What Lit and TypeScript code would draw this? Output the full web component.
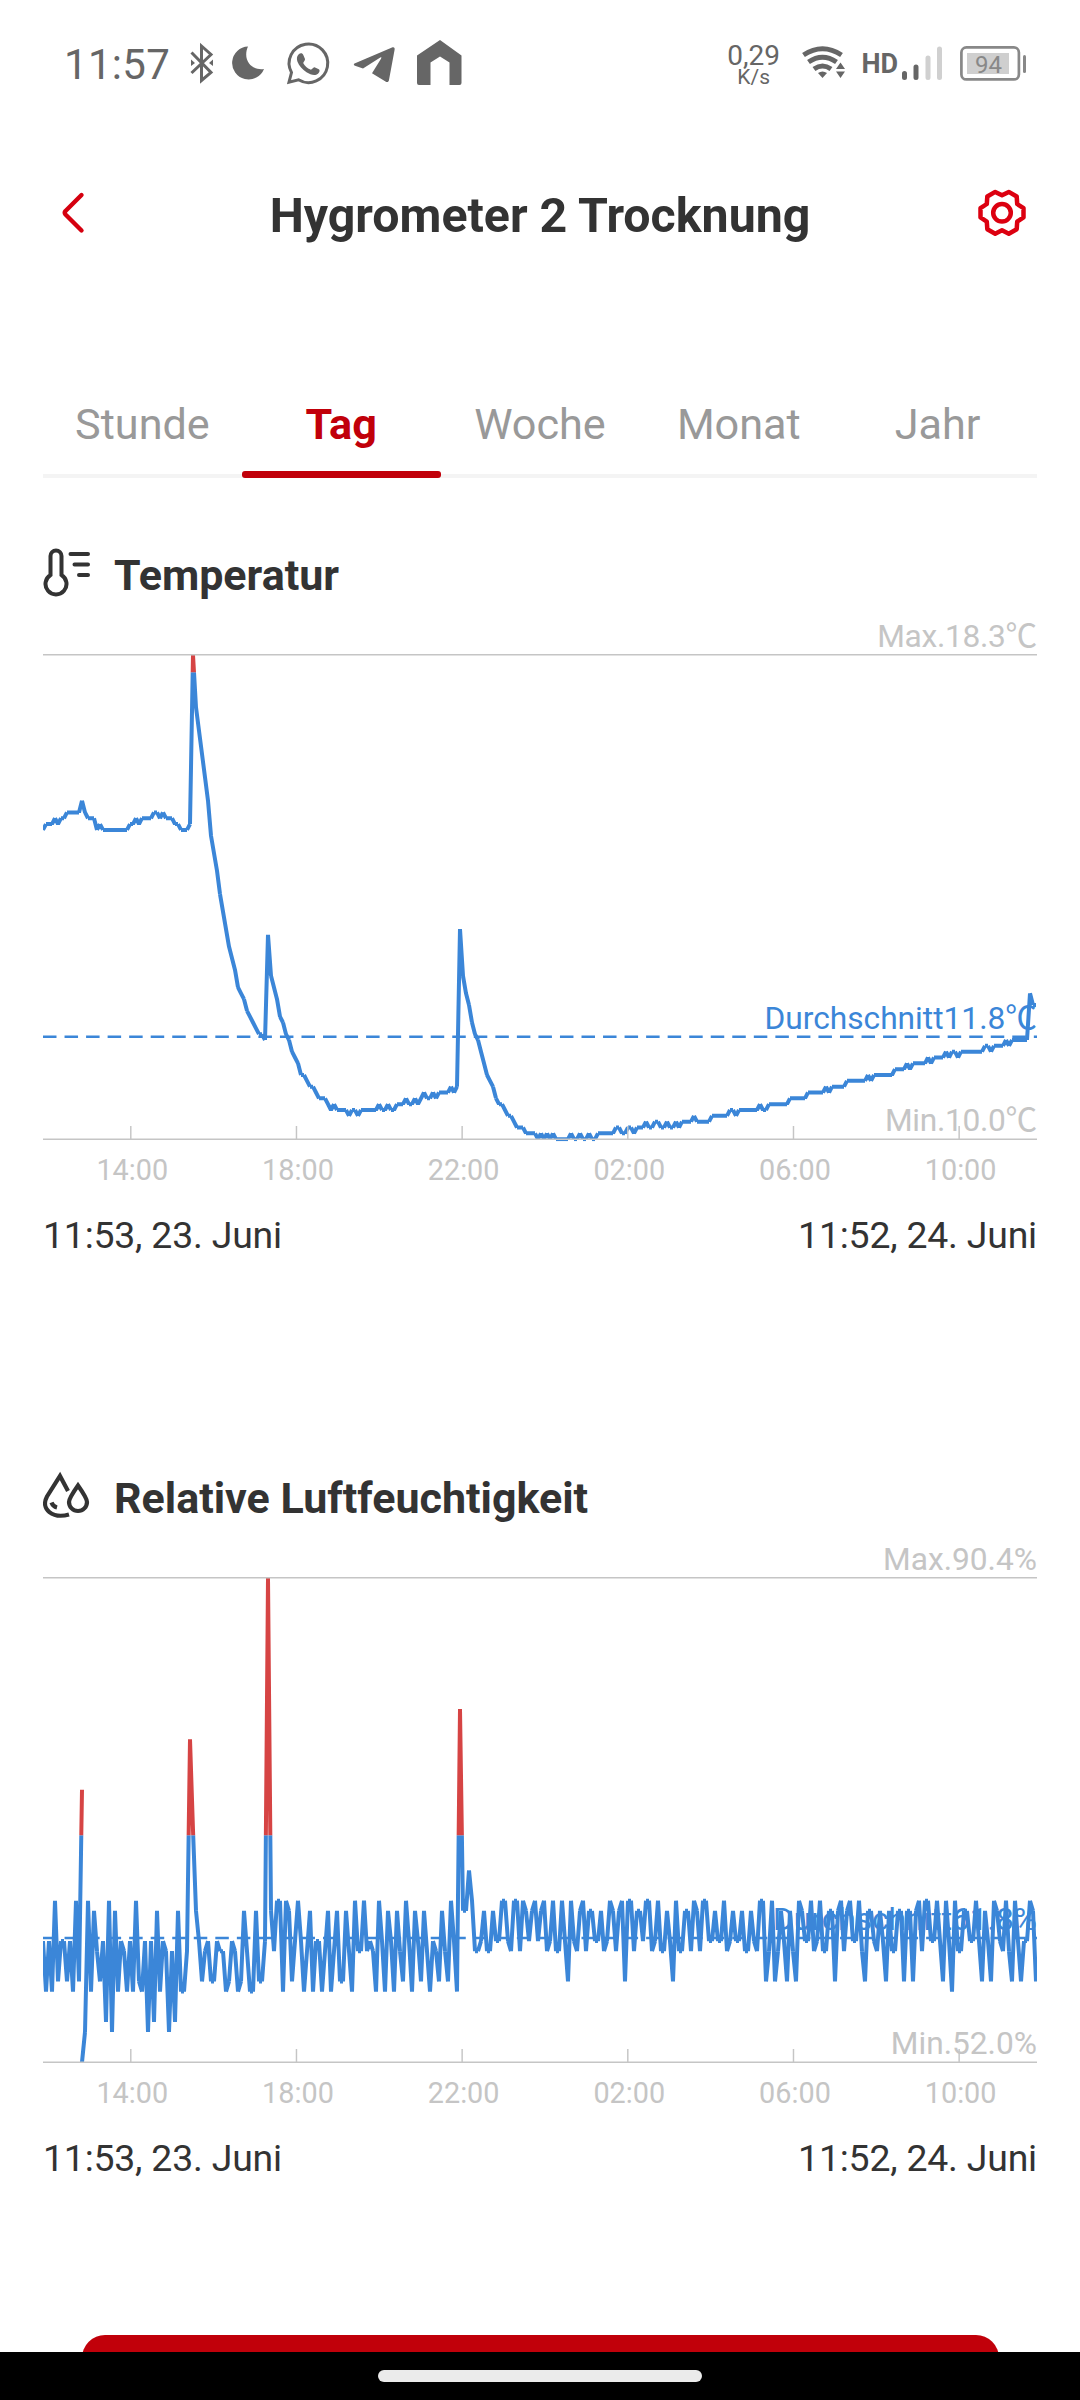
import { LitElement, html, svg, css } from "lit";
import { customElement, property, state } from "lit/decorators.js";
import { classMap } from "lit/directives/class-map.js";

/** A run of readings: first sample slot plus consecutive levels. */
interface Run {
  start: number;
  levels: number[];
}

interface Series {
  runs: Run[];
  maxLevel: number;
  alertLevel: number;
  averageY: number;
  max: string;
  average: string;
  min: string;
}

const rep = (value: number, count: number): number[] => new Array(count).fill(value);

/* Tenths of a degree above 10.0 °C */
const temperature: Series = {
  maxLevel: 83,
  alertLevel: 80,
  averageY: 432.8,
  max: "Max.18.3℃",
  average: "Durchschnitt11.8℃",
  min: "Min.10.0℃",
  runs: [
    {
      start: 0,
      levels: [
        53, 54, 54, 54, 55, 54, 55, 55, 56, 56, 56, 56, 56, 58, 56, 55, 55, 55, 53, 54,
        ...rep(53, 9), 54, 54, 55, 54, 55, 55, 55, 55, 56, 56, 55, 56, 55, 55, 55, 54, 54, 53, 53, 53, 54,
        83, 74, 70, 66, 62, 58, 52, 49, 46, 42, 39, 36, 33, 31, 29, 26, 25, 24, 22, 21, 20, 19, 18, 18, 17,
        35, 28, 26, 24, 21, 20, 18, 17, 15, 14, 13, 11, 11, 10, 9, 9, 8, 7, 7, 7, 6, 5, 6, 5,
        5, 5, 5, 4, 5, 5, 4, 5, 5, 5, 5, 5, 5, 6, 5, 5, 6, 5, 5, 6, 6, 6, 7, 6, 6, 7, 6, 7,
        8, 7, 7, 8, 7, 8, 8, 8, 8, 9, 8, 9,
        36, 28, 25, 23, 20, 18, 17, 15, 13, 11, 10, 9, 7, 6, 6, 5, 4, 4, 3, 2, 2, 2,
        1, 1, 1, 1, 0, 1, 0, 1, 0, 1, 0, 0, 0, 0, 0, 1, 0, 0, 1, 0, 0, 1, 0, 0,
        ...rep(1, 6), 2, 2, 1, 1, 2, 2, 1, 2, 2, 2, 3, 2, 2, 3, 3, 2, 2, 3, 2, 2, 3, 2,
        ...rep(3, 4), 4, ...rep(3, 5), ...rep(4, 6), 5, 5, 4, ...rep(5, 7), 6, 5, 5,
        ...rep(6, 7), ...rep(7, 6), ...rep(8, 6), 9, 8, ...rep(9, 5), ...rep(10, 7), 11, 10,
        ...rep(11, 7), ...rep(12, 4), 13, 12, ...rep(13, 5), 14, 13, ...rep(14, 4), 15, 14, 15, 15, 14,
        ...rep(15, 8), 16, 16, 15, 16, 16, 16, 16, 17, 16, ...rep(17, 6), 25, 23, 23,
      ],
    },
  ],
};

/* Steps of 0.8 % above 52.0 % */
const humidity: Series = {
  maxLevel: 48,
  alertLevel: 22.5,
  averageY: 411,
  max: "Max.90.4%",
  average: "Durchschnitt61.8%",
  min: "Min.52.0%",
  runs: [
    { start: 0, levels: [12, 7, 12, 7, 16, 8, 12, 12, 8, 12, 7, 16, 8, 27] },
    {
      start: 13,
      levels: [
        0, 3, 16, 7, 15, 11, 8, 12, 4, 16, 3, 15, 7, 12, 11, 7, 12, 7, 16, 8, 7, 12, 3, 12, 4, 15, 7,
        12, 11, 3, 11, 4, 15, 7, 7, 11, 32, 23, 15, 12, 8, 11, 12, 8, 8, 12, 11, 11, 7, 8, 12, 11, 7, 8,
        15, 11, 7, 7, 15, 8, 8, 12, 48, 15, 11, 16, 16, 7, 16, 15, 8, 12, 16, 12, 7, 11, 15, 7, 12, 12, 7,
        11, 15, 7, 11, 15, 8, 8, 15, 11, 7, 16, 11, 11, 16, 11, 12, 11, 7, 16, 12,
        7, 15, 12, 7, 15, 11, 8, 16, 12, 7, 15, 12, 8, 15, 11, 7, 12, 11, 8, 15, 11, 8, 16, 12, 7,
        35, 15, 15, 19, 16, 11, 11, 12, 15, 11, 11, 15, 12, 12, 16, 16, 12, 11, 16, 16, 11, 16, 15, 12,
        15, 16, 12, 15, 16, 11, 12, 16, 11, 11, 16, 12, 8, 16, 12, 11, 15, 16, 11, 15, 15, 12, 12, 15,
        11, 12, 16, 15, 11, 15, 16, 8, 16, 16, 11, 15, 15, 12, 16, 16, 11, 12, 16, 11, 11, 15, 12, 8,
        16, 11, 11, 15, 15, 11, 16, 15, 11, 16, 16, 12, 12, 15, 12,
        12, 16, 11, 12, 15, 12, 12, 15, 11, 11, 15, 12, 11, 16, 16, 8, 11, 16, 8, 11, 15, 12, 8, 15,
        11, 8, 16, 15, 12, 12, 16, 11, 12, 16, 11, 11, 15, 15, 8, 15, 16, 11, 15, 16, 12, 12, 16, 11,
        8, 15, 15, 12, 11, 15, 12, 8, 15, 11, 11, 15, 15, 8, 15, 15, 8, 15, 16, 11, 16, 16, 12, 12,
        16, 12, 8, 16, 12, 7, 16, 11, 11, 15, 15, 12, 12, 16, 12, 8, 15, 12, 8, 16, 15, 12, 11, 16,
        11, 8, 16, 12, 8, 12, 12, 16, 15, 8,
      ],
    },
  ],
};

const hours = ["14:00", "18:00", "22:00", "02:00", "06:00", "10:00"];

const WIDTH = 994;
const TOP = 50.8;
const BOTTOM = 535.2;
const STEP = 3;

@customElement("history-chart")
class HistoryChart extends LitElement {
  @property({ attribute: false }) series!: Series;
  @property() name = "";

  static styles = css`
    :host { display: block; height: 596px; }
    .plot { display: block; font-family: Roboto, "Noto Sans CJK SC", sans-serif; }
    .note { font-size: 31.7px; fill: #c5c5c5; text-anchor: end; }
    .note.avg { fill: #3b86d8; }
    .note.tight { letter-spacing: -0.3px; }
    .hour { font-size: 28.8px; fill: #c5c5c5; text-anchor: middle; }
    .axis { stroke: #c5c5c5; stroke-width: 1.45; }
    .mean { stroke: #3b86d8; stroke-width: 2.5; stroke-dasharray: 13.5 8.04; }
    .line { fill: none; stroke-width: 4; }
    .calm { stroke: #3b86d8; }
    .alert { stroke: #d64444; }
  `;

  private y(level: number) {
    return BOTTOM - (level / this.series.maxLevel) * (BOTTOM - TOP);
  }

  private get trace() {
    const out: string[] = [];
    for (const { start, levels } of this.series.runs) {
      for (let i = 1; i < levels.length; i++) {
        const x = (start + i) * STEP;
        out.push(`M${x - STEP} ${this.y(levels[i - 1]).toFixed(2)}L${x} ${this.y(levels[i]).toFixed(2)}`);
      }
    }
    return out.join("");
  }

  render() {
    const s = this.series;
    const cut = this.y(s.alertLevel);
    const hi = `${this.name}-hi`;
    const lo = `${this.name}-lo`;
    const note = { note: true, tight: s.max.endsWith("℃") };
    return html`
      <svg class="plot" width=${WIDTH} height="596" viewBox="0 0 994 596">
        <defs>
          <clipPath id=${hi}><rect x="0" y=${TOP} width=${WIDTH} height=${cut - TOP}></rect></clipPath>
          <clipPath id=${lo}><rect x="0" y=${cut} width=${WIDTH} height=${BOTTOM + 2 - cut}></rect></clipPath>
        </defs>
        <line class="mean" x1="0" x2=${WIDTH} y1=${s.averageY} y2=${s.averageY}></line>
        <path class="line calm" clip-path="url(#${lo})" d=${this.trace}></path>
        <path class="line alert" clip-path="url(#${hi})" d=${this.trace}></path>
        <line class="axis" x1="0" x2=${WIDTH} y1=${TOP} y2=${TOP}></line>
        <line class="axis" x1="0" x2=${WIDTH} y1=${BOTTOM} y2=${BOTTOM}></line>
        ${hours.map((hour, i) => {
          const x = 87.8 + i * 165.67;
          return svg`
            <line class="axis" x1=${x} x2=${x} y1="522" y2=${BOTTOM}></line>
            <text class="hour" x=${x + 1.5} y="576">${hour}</text>`;
        })}
        <text class=${classMap(note)} x="994" y="42.5">${s.max}</text>
        <text class="note avg" x="994" y=${s.averageY - 7.8}>${s.average}</text>
        <text class=${classMap(note)} x="994" y="527">${s.min}</text>
      </svg>`;
  }
}

@customElement("status-bar")
class StatusBar extends LitElement {
  static styles = css`
    :host { display: flex; align-items: center; height: 130px; padding: 0 54px 0 64px; box-sizing: border-box; color: #666; }
    .time { width: 105px; font-size: 42px; line-height: 50px; letter-spacing: 0.3px; white-space: nowrap; }
    .left { display: block; margin-left: 18px; }
    .rate { display: flex; flex-direction: column; align-items: center; margin-left: auto; padding-top: 1px; }
    .num { font-size: 28px; line-height: 23px; }
    .unit { font-size: 21px; line-height: 21px; }
    .right { display: block; margin-left: 20px; }
    .hd { font-size: 27px; font-weight: 700; fill: #666; }
    .pct { font-size: 24px; fill: #888; text-anchor: middle; }
  `;

  render() {
    return html`
      <span class="time">11:57</span>
      <svg class="left" width="276" height="60" viewBox="187 35 276 60" fill="#666">
        <path d="M191.5 52.5 211 72.5 201.500 80.500V46L211 54.500 191.500 73" fill="none" stroke="#666" stroke-width="3"></path>
        <path d="M191 59.500 195 63 191 66zM213 59.500 209 63 213 66z"></path>
        <path d="M248 46.500A16.500 16.500 0 1 0 264 69C252 71 242 60 248 46.500z"></path>
        <path d="M289 82.200 291.500 72.500A19.300 19.300 0 1 1 298.500 79.800z" fill="none" stroke="#666" stroke-width="3"></path>
        <path d="M298.500 54.500c2-2 4-1.500 4.800.5l1.700 4c.5 1.400-2 3-1.700 4.200 1.600 3 4 5 7.200 6.400 1.400.5 2.700-2.800 4-2.300l4.300 2c1.400.7.8 3.200-.8 4.500-3 2.400-7.500 1-11.500-1.500-4-2.600-7.500-6.500-9-10.500-1-2.800-.8-5.500 1-7.300z"></path>
        <path d="M354.500 63.500 392 47.500c2-.8 3 .3 2.600 2.300L389 80c-.4 2-1.700 2.700-3.500 1.600L372 73.200l9-14.500c1-1.700-.2-1.700-1.500-.7L363 68.500l-8-2.800c-1.500-.6-1.500-1.600-.5-2.200z"></path>
        <path d="M440 40 461.500 55.500V83q0 2-2 2H449.500V62.500L440 56.500 430.500 62.500V85H419q-2 0-2-2V55.500z"></path>
      </svg>
      <div class="rate"><span class="num">0,29</span><span class="unit">K/s</span></div>
      <svg class="right" width="226" height="60" viewBox="800 35 226 60">
        <g fill="none" stroke="#666" stroke-width="5">
          <path d="M803.500 55Q822.500 42.500 841.500 55"></path>
          <path d="M808.500 62Q822.500 52.500 836.500 62"></path>
          <path d="M814 69Q822.500 63 831 69"></path>
        </g>
        <path d="M818 73Q822.500 70 827 73L822.500 78z" fill="#666"></path>
        <path d="M840.500 62.500 845 69H836zM840.500 78 845 71.500H836z" fill="#666"></path>
        <text class="hd" x="861.500" y="73">HD</text>
        <g stroke-width="5" stroke-linecap="round">
          <path d="M904.500 73.500V77.500M916 67V77.500" stroke="#666"></path>
          <path d="M928 58V77.500M939.500 49V77.500" stroke="#d0d0d0"></path>
        </g>
        <rect x="961.400" y="47.400" width="57.500" height="32" rx="5" fill="none" stroke="#888" stroke-width="2.700"></rect>
        <rect x="967" y="53" width="42" height="21" fill="#cfcfcf"></rect>
        <rect x="1023" y="55" width="3" height="18" rx="1.500" fill="#888"></rect>
        <text class="pct" x="988.500" y="73">94</text>
      </svg>`;
  }
}

@customElement("app-root")
class AppRoot extends LitElement {
  @state() private active = "Tag";

  static styles = css`
    :host {
      display: flex; flex-direction: column; width: 1080px; height: 2400px; overflow: hidden;
      background: #fff; color: #333; font-family: Roboto, "Noto Sans CJK SC", sans-serif;
    }
    .head { display: grid; grid-template-columns: 120px 1fr 120px; align-items: center; height: 170px; flex: none; }
    .back { display: block; margin: 0 0 5px 60px; }
    .gear { display: block; margin: 0 0 5px 16px; }
    .title { margin: 0; padding-top: 2px; text-align: center; font-size: 48.3px; line-height: 56px; font-weight: 700; }
    .page { flex: 1; min-height: 0; overflow: hidden; padding: 70px 43px 0; }
    .tabs { display: grid; grid-template-columns: repeat(5, 1fr); height: 108px; box-shadow: inset 0 -4px #f4f4f4; }
    .tab { display: flex; flex-direction: column; font-size: 43.2px; line-height: 110px; text-align: center; color: #999; }
    .tab.on { color: #c1000a; font-weight: 700; }
    .bar { height: 7px; margin-top: -9px; border-radius: 3px; background: #c1000a; }
    .card { height: 857px; padding-top: 66px; }
    .card-head { display: flex; align-items: center; gap: 22px; height: 60px; }
    .glyph { margin-bottom: 4px; }
    .card-title { margin: 0; font-size: 43px; line-height: 58px; padding-top: 2px; font-weight: 700; }
    .range { display: flex; justify-content: space-between; margin-top: 13px; font-size: 37.4px; line-height: 44px; letter-spacing: -0.2px; }
    .action { height: 132px; margin: 11px 38.5px 0; border-radius: 23px; background: #c1000a; }
    .nav { display: flex; justify-content: center; align-items: center; height: 48px; flex: none; background: #000; }
    .pill { width: 324px; height: 12px; border-radius: 6px; background: #ebebeb; }
  `;

  private card(title: string, name: string, icon: unknown, series: Series) {
    return html`
      <section class="card">
        <div class="card-head">${icon}<h2 class="card-title">${title}</h2></div>
        <history-chart .series=${series} .name=${name}></history-chart>
        <div class="range"><span>11:53, 23. Juni</span><span>11:52, 24. Juni</span></div>
      </section>`;
  }

  render() {
    const thermometer = html`
      <svg class="glyph" width="49" height="49" viewBox="43 547 49 49" fill="none" stroke="#333" stroke-width="4">
        <path d="M50.500 574V555a5.500 5.500 0 0 1 11 0V574a10.500 10.500 0 1 1-11 0z"></path>
        <path d="M70.500 553H88M74.500 563.500H88M79 574H88" stroke-linecap="round"></path>
      </svg>`;
    const drops = html`
      <svg class="glyph" width="49" height="49" viewBox="43 1470.500 49 49" fill="none" stroke="#333" stroke-width="4.200">
        <path d="M68 1490.500 60 1475.500 47 1496C40 1509 53 1518.500 69 1514"></path>
        <path d="M78 1485C72 1493.500 69 1498 69 1501.500a9 9 0 0 0 18 0C87 1498 84 1493.500 78 1485z"></path>
        <path d="M51.500 1502Q53 1506 57 1507"></path>
      </svg>`;
    return html`
      <status-bar></status-bar>
      <header class="head">
        <svg class="back" width="26" height="44" viewBox="60 191 26 44" fill="none" stroke="#d5000f" stroke-width="4.400" stroke-linecap="round" stroke-linejoin="round">
          <path d="M81.500 195 65.500 211Q64 212.800 65.500 214.500L81.500 230.500"></path>
        </svg>
        <h1 class="title">Hygrometer 2 Trocknung</h1>
        <svg class="gear" width="52" height="52" viewBox="976 187 52 52" fill="none" stroke="#dc0010" stroke-width="4.500">
          <circle cx="1002" cy="212.800" r="8.800"></circle>
          <path d="M1002 195.300 1008.800 191.900 1016.700 196.500 1017.200 204 1023.500 208.200V217.400L1017.200 221.600 1016.700 229.200 1008.800 233.700 1002 230.300 995.200 233.700 987.300 229.200 986.800 221.600 980.500 217.400V208.200L986.800 204 987.300 196.500 995.200 191.900z" stroke-linejoin="round"></path>
        </svg>
      </header>
      <main class="page">
        <nav class="tabs">
          ${["Stunde", "Tag", "Woche", "Monat", "Jahr"].map(
            (label) => html`
              <div class=${classMap({ tab: true, on: label === this.active })} @click=${() => (this.active = label)}>
                <span>${label}</span>${label === this.active ? html`<div class="bar"></div>` : ""}
              </div>`
          )}
        </nav>
        ${this.card("Temperatur", "temperature", thermometer, temperature)}
        ${this.card("Relative Luftfeuchtigkeit", "humidity", drops, humidity)}
        <div class="action"></div>
      </main>
      <div class="nav"><div class="pill"></div></div>`;
  }
}
